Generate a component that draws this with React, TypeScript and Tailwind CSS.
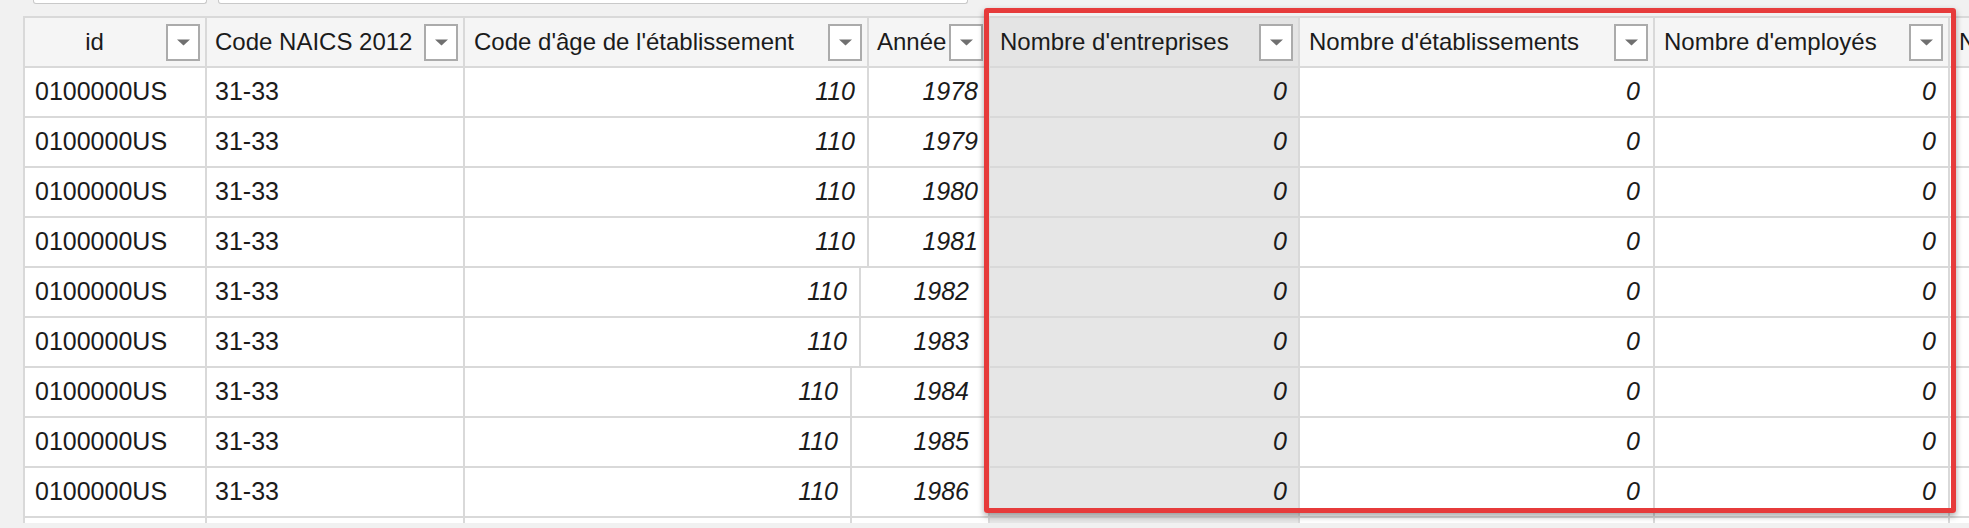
const rows = [
  { year: '1978', c3: 'w-[404px]', c4: 'w-[121px] pr-[10px]' },
  { year: '1979', c3: 'w-[404px]', c4: 'w-[121px] pr-[10px]' },
  { year: '1980', c3: 'w-[404px]', c4: 'w-[121px] pr-[10px]' },
  { year: '1981', c3: 'w-[404px]', c4: 'w-[121px] pr-[10px]' },
  { year: '1982', c3: 'w-[396px]', c4: 'w-[129px] pr-[19px]' },
  { year: '1983', c3: 'w-[396px]', c4: 'w-[129px] pr-[19px]' },
  { year: '1984', c3: 'w-[387px]', c4: 'w-[138px] pr-[19px]' },
  { year: '1985', c3: 'w-[387px]', c4: 'w-[138px] pr-[19px]' },
  { year: '1986', c3: 'w-[387px]', c4: 'w-[138px] pr-[19px]' },
  { year: '', c3: 'w-[387px]', c4: 'w-[138px] pr-[19px]' },
];

const cell = 'h-[50px] shrink-0 flex items-center border-r-2 border-b-2 border-[#d9d9d9] whitespace-nowrap overflow-hidden';

function Dropdown() {
  return (
    <div className="ml-auto mr-[5px] flex h-[37px] w-[34px] shrink-0 items-center justify-center border-2 border-[#ababab] bg-white">
      <svg width="13" height="7" viewBox="0 0 13 7">
        <path d="M0 0.5 L13 0.5 L6.5 6.5 Z" fill="#707070" />
      </svg>
    </div>
  );
}

export default function App() {
  return (
    <div className="relative h-[528px] w-full overflow-hidden bg-[#f1f1f1] font-['Liberation_Sans',Arial,sans-serif] text-[25px] text-[#1b1b1b]">
      {/* toolbar inputs cut off at the top */}
      <div className="flex h-4 gap-[11px] pl-[33px]">
        <div className="h-[4px] w-[174px] rounded-b-[3px] border-x border-b border-[#c9c9c9] bg-white" />
        <div className="h-[4px] w-[750px] rounded-b-[3px] border-x border-b border-[#c9c9c9] bg-white" />
      </div>

      {/* grid */}
      <div className="ml-[23px] h-[507px] w-[2100px] overflow-hidden border-l-2 border-t-2 border-[#d9d9d9] bg-white">
        <div className="flex bg-[#f5f5f5] text-[24px]">
          <div className={`${cell} w-[182px]`}>
            <span className="flex-1 pr-[2px] text-center">id</span>
            <Dropdown />
          </div>
          <div className={`${cell} w-[258px] pl-[8px]`}>
            <span>Code NAICS 2012</span>
            <Dropdown />
          </div>
          <div className={`${cell} w-[404px] pl-[9px]`}>
            <span>Code d'âge de l'établissement</span>
            <Dropdown />
          </div>
          <div className={`${cell} w-[121px] pl-[8px]`}>
            <span>Année</span>
            <Dropdown />
          </div>
          <div className={`${cell} w-[310px] bg-[#e4e4e4] pl-[10px]`}>
            <span>Nombre d'entreprises</span>
            <Dropdown />
          </div>
          <div className={`${cell} w-[355px] pl-[9px]`}>
            <span>Nombre d'établissements</span>
            <Dropdown />
          </div>
          <div className={`${cell} w-[295px] pl-[9px]`}>
            <span>Nombre d'employés</span>
            <Dropdown />
          </div>
          <div className={`${cell} w-[200px] pl-[9px]`}>
            <span>Nombre</span>
          </div>
        </div>

        {rows.map((r, i) => (
          <div key={i} className="flex">
            <div className={`${cell} w-[182px] pl-[10px]`}>{r.year && '0100000US'}</div>
            <div className={`${cell} w-[258px] pl-[8px]`}>{r.year && '31-33'}</div>
            <div className={`${cell} ${r.c3} justify-end pr-[12px] italic`}>{r.year && '110'}</div>
            <div className={`${cell} ${r.c4} justify-end italic`}>{r.year}</div>
            <div className={`${cell} w-[310px] justify-end bg-[#e6e6e6] pr-[11px] italic`}>{r.year && '0'}</div>
            <div className={`${cell} w-[355px] justify-end pr-[13px] italic`}>{r.year && '0'}</div>
            <div className={`${cell} w-[295px] justify-end pr-[12px] italic`}>{r.year && '0'}</div>
            <div className={`${cell} w-[200px]`} />
          </div>
        ))}
      </div>

      {/* highlight frame */}
      <div className="pointer-events-none absolute left-[984px] top-[8px] h-[505px] w-[972px] rounded-[3px] border-[5px] border-[#e63b3b] shadow-[0_3px_6px_rgba(0,0,0,0.35)]" />
    </div>
  );
}
